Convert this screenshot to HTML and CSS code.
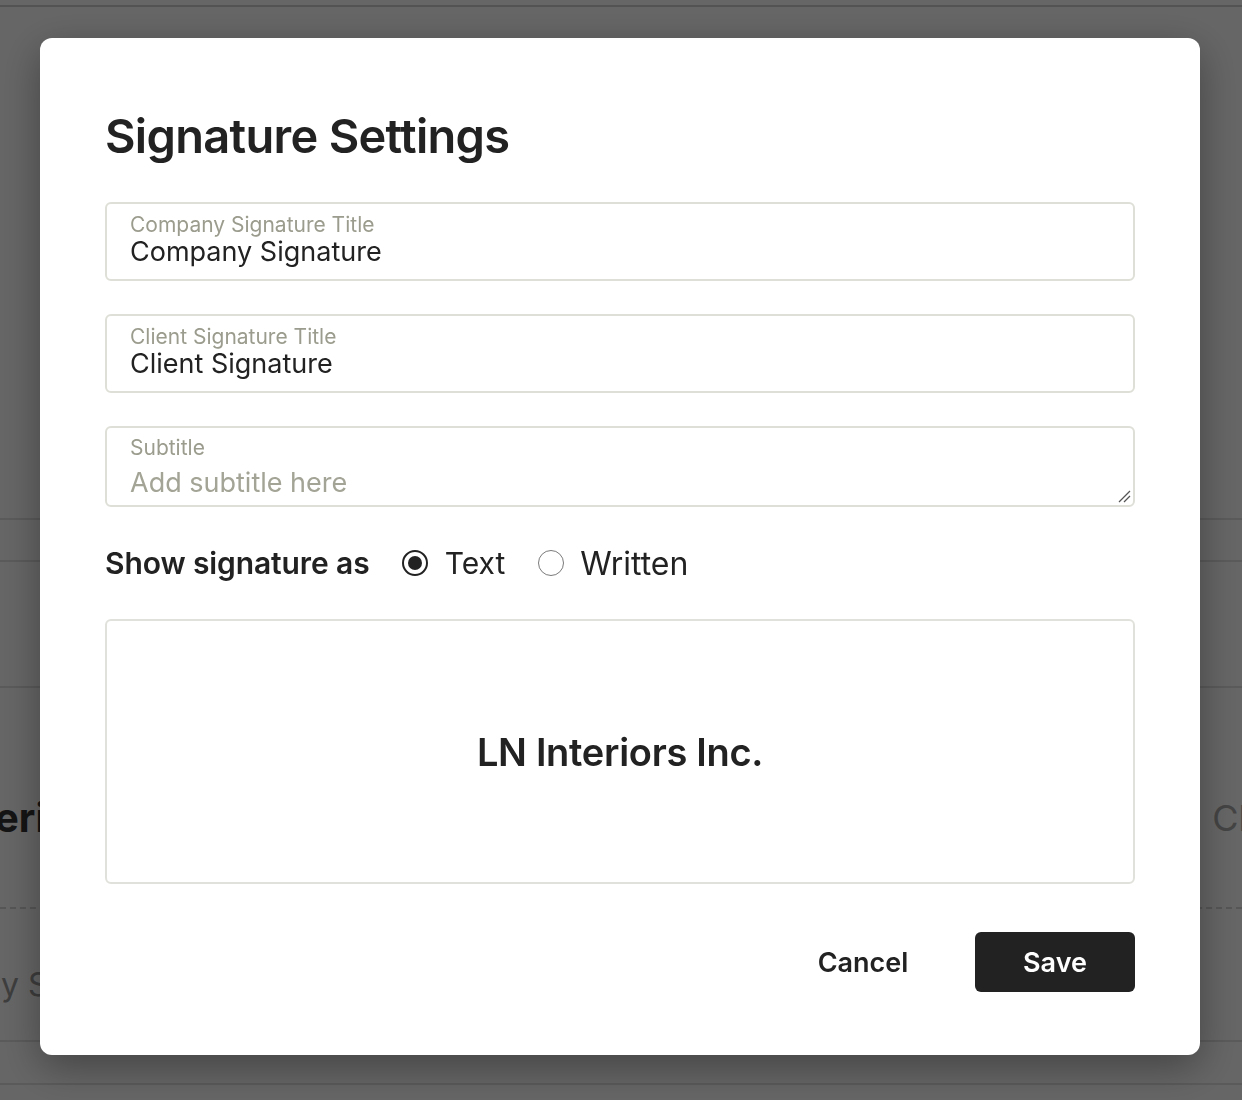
FILE: index.html
```html
<!DOCTYPE html>
<html lang="en">
<head>
<meta charset="utf-8">
<title>Signature Settings</title>
<link rel="stylesheet" href="styles.css">
</head>
<body>
<div class="page">
  <div class="bg-row r1"></div>
  <div class="bg-row r2"></div>
  <div class="bg-row r3"></div>
  <div class="bg-row r4"></div>
  <div class="bg-row r5">
    <span class="bg-company">LN Interiors Inc.</span>
    <span class="bg-client">Client</span>
  </div>
  <div class="bg-row r6">
    <span class="bg-sig">Company Signature</span>
  </div>
  <div class="bg-row r7"></div>
</div>

<div class="overlay">
  <div class="modal" role="dialog" aria-labelledby="dlg-title">
    <h1 id="dlg-title" class="title">Signature Settings</h1>

    <div class="field">
      <label class="field-label">Company Signature Title</label>
      <div class="field-value">Company Signature</div>
    </div>

    <div class="field">
      <label class="field-label">Client Signature Title</label>
      <div class="field-value">Client Signature</div>
    </div>

    <div class="field field-area">
      <label class="field-label">Subtitle</label>
      <div class="field-placeholder">Add subtitle here</div>
      <svg class="resize" width="14" height="14" viewBox="0 0 14 14" aria-hidden="true">
        <path d="M2 13 L13 2 M7 13 L13 7" stroke="#555" stroke-width="1.3" fill="none"/>
      </svg>
    </div>

    <div class="radio-row">
      <span class="radio-title">Show signature as</span>
      <span class="radio-opt"><span class="radio checked"></span>Text</span>
      <span class="radio-opt"><span class="radio"></span>Written</span>
    </div>

    <div class="preview">LN Interiors Inc.</div>

    <div class="actions">
      <button class="btn btn-cancel">Cancel</button>
      <button class="btn btn-save">Save</button>
    </div>
  </div>
</div>
</body>
</html>
```

FILE: styles.css
```css
* { box-sizing: border-box; }

html, body {
  margin: 0;
  padding: 0;
}

body {
  width: 1242px;
  height: 1100px;
  overflow: hidden;
  background: #ffffff;
  font-family: Inter, "Noto Sans", "Liberation Sans", sans-serif;
  color: #222222;
}

/* background page */
.page {
  display: flex;
  flex-direction: column;
}

.bg-row {
  border-bottom: 2px solid #e2e2e2;
}

.r1 { height: 7px; border-bottom-color: #cfcfcf; }
.r2 { height: 513px; }
.r3 { height: 42px; }
.r4 { height: 126px; }
.r5 {
  height: 221px;
  border-bottom: 2px dashed #d6d6d6;
  display: flex;
  align-items: center;
  justify-content: space-between;
  padding-top: 40px;
}
.r6 {
  height: 133px;
  display: flex;
  align-items: center;
  padding-top: 20px;
}
.r7 { height: 43px; }

.bg-company {
  font-size: 40px;
  font-weight: 700;
  color: #333333;
  margin-left: -118px;
  white-space: nowrap;
}

.bg-client {
  font-size: 36px;
  color: #aaaaaa;
  margin-right: -68px;
}

.bg-sig {
  font-size: 32px;
  color: #9a9a9a;
  margin-left: -126px;
  white-space: nowrap;
}

/* overlay + modal */
.overlay {
  position: fixed;
  inset: 0;
  background: rgba(0, 0, 0, 0.6);
  display: flex;
  justify-content: flex-start;
  align-items: flex-start;
  padding: 38px 0 0 40px;
}

.modal {
  width: 1160px;
  background: #ffffff;
  border-radius: 12px;
  padding: 69px 65px 63px;
  box-shadow: 0 12px 40px rgba(0, 0, 0, 0.35);
  display: flex;
  flex-direction: column;
}

.title {
  margin: 0 0 37px;
  font-size: 47px;
  line-height: 58px;
  font-weight: 600;
  letter-spacing: -0.7px;
  color: #222222;
}

.field {
  position: relative;
  border: 2px solid #dedfd7;
  border-radius: 6px;
  padding: 10px 23px 11px;
  height: 79px;
  margin-bottom: 33px;
  display: flex;
  flex-direction: column;
}

.field-label {
  font-size: 21px;
  line-height: 22px;
  color: #9b9c8d;
}

.field-value {
  font-size: 27px;
  line-height: 32px;
  color: #222222;
}

.field-area {
  height: 81px;
  padding: 9px 23px 6px;
  margin-bottom: 36px;
}

.field-placeholder {
  margin-top: 8px;
  font-size: 27px;
  line-height: 32px;
  color: #a3a495;
}

.resize {
  position: absolute;
  right: 2px;
  bottom: 2px;
}

.radio-row {
  display: flex;
  align-items: center;
  height: 40px;
  margin-bottom: 36px;
}

.radio-title {
  font-size: 30px;
  font-weight: 600;
  letter-spacing: -0.1px;
  margin-right: 32px;
}

.radio-opt {
  display: flex;
  align-items: center;
  font-size: 30px;
  margin-right: 33px;
}

.radio-opt:last-child {
  font-size: 32px;
}

.radio {
  width: 26px;
  height: 26px;
  border-radius: 50%;
  border: 1.5px solid #7a7a7a;
  margin-right: 17px;
  display: flex;
  align-items: center;
  justify-content: center;
}

.radio-opt:last-child .radio {
  margin-right: 16px;
}

.radio.checked {
  border: 2px solid #222222;
}

.radio.checked::after {
  content: "";
  width: 14px;
  height: 14px;
  border-radius: 50%;
  background: #222222;
}

.preview {
  height: 265px;
  border: 2px solid #e1e1dc;
  border-radius: 6px;
  display: flex;
  align-items: center;
  justify-content: center;
  font-size: 38px;
  font-weight: 600;
  letter-spacing: -0.3px;
  color: #222222;
  margin-bottom: 48px;
}

.actions {
  display: flex;
  justify-content: flex-end;
  gap: 32px;
}

.btn {
  width: 160px;
  height: 60px;
  border-radius: 6px;
  font-family: inherit;
  font-size: 27px;
  font-weight: 600;
  border: none;
  cursor: pointer;
}

.btn-cancel {
  background: transparent;
  color: #222222;
}

.btn-save {
  background: #222222;
  color: #ffffff;
}
```
